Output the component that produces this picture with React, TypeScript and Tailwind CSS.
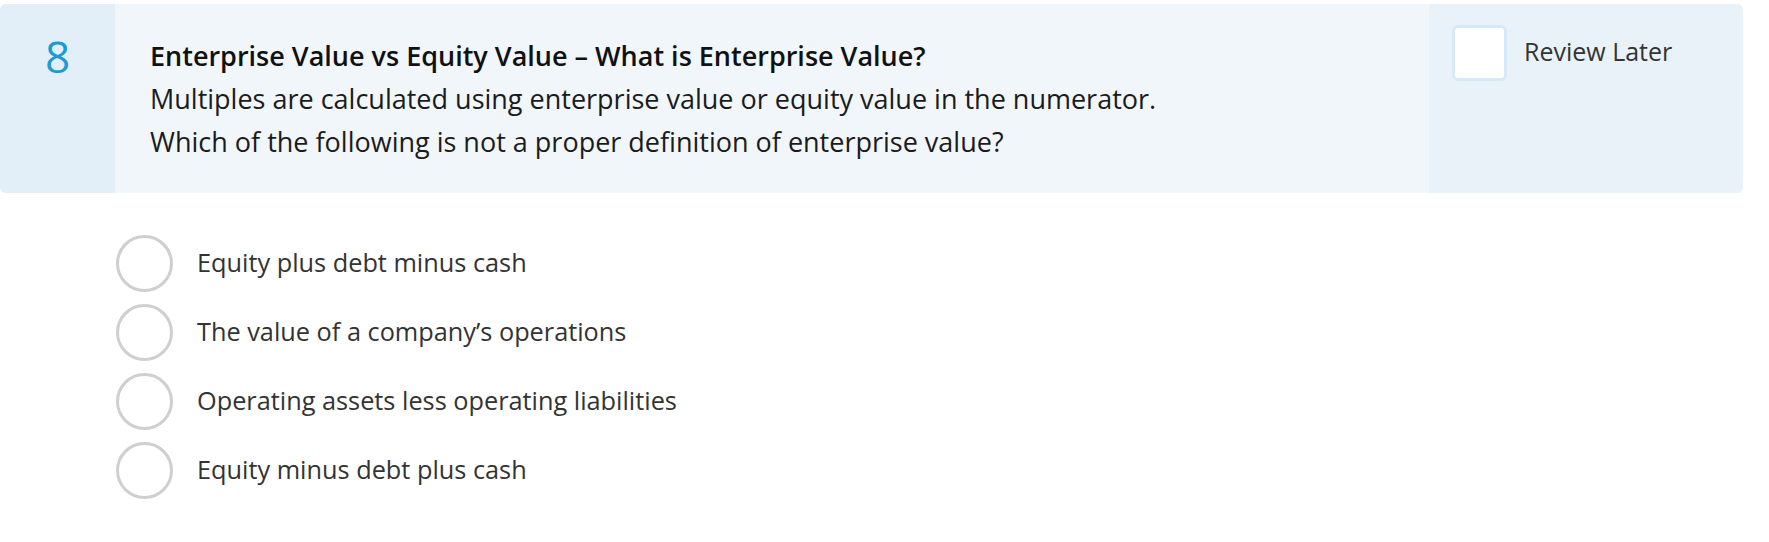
import React from "react";

const options = [
  "Equity plus debt minus cash",
  "The value of a company\u2019s operations",
  "Operating assets less operating liabilities",
  "Equity minus debt plus cash",
];

export default function App() {
  return (
    <div className="w-[1769px] h-[542px] bg-white" style={{ fontFamily: '"Open Sans", "Liberation Sans", sans-serif' }}>
      <div className="pt-[4px] pr-[26px]">
        <div className="flex h-[189px] rounded-[6px] overflow-hidden bg-[#f1f6fa]">
          <div className="w-[115px] shrink-0 bg-[#e2eff8] flex justify-center pt-[24px]">
            <span className="text-[44px] leading-[56px] text-[#1a9bd7]">8</span>
          </div>
          <div className="flex-1 pl-[35px] pt-[30px] text-[27px] leading-[43px] text-[#1b1b1b]">
            <div className="font-semibold text-[#111]">Enterprise Value vs Equity Value – What is Enterprise Value?</div>
            <div>Multiples are calculated using enterprise value or equity value in the numerator.</div>
            <div>Which of the following is not a proper definition of enterprise value?</div>
          </div>
          <div className="w-[314px] shrink-0 bg-[#eaf2f9] flex items-start pl-[23px] pt-[21px] gap-[17px]">
            <div className="w-[55px] h-[56px] rounded-[6px] bg-white border-[3px] border-[#d6e9f6]" />
            <span className="text-[25px] leading-[30px] mt-[11px] text-[#333]">Review Later</span>
          </div>
        </div>
      </div>
      <div className="pl-[116px] pt-[42px] flex flex-col gap-[12px]">
        {options.map((o) => (
          <div key={o} className="flex items-center gap-[24px]">
            <div className="w-[57px] h-[57px] rounded-full border-[3px] border-[#cfcfcf] bg-white shrink-0" />
            <span className="text-[25.3px] leading-[30px] -mt-[3px] text-[#333]">{o}</span>
          </div>
        ))}
      </div>
    </div>
  );
}
